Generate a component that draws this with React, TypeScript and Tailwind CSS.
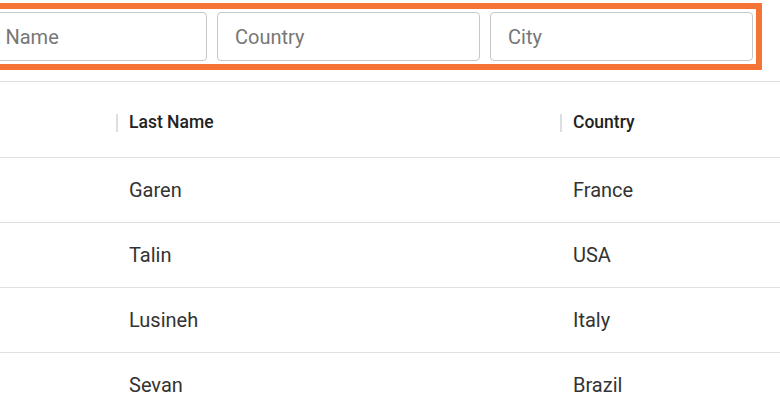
import React from "react";

const rows = [
  ["", "Garen", "France"],
  ["", "Talin", "USA"],
  ["", "Lusineh", "Italy"],
  ["", "Sevan", "Brazil"],
];

export default function App() {
  return (
    <div className="w-[780px] h-[417px] overflow-hidden bg-white" style={{ fontFamily: "Roboto, 'Noto Sans', sans-serif" }}>
      <div className="-ml-[65px] w-[845px] pt-[3px]">
        <div className="w-[827px] h-[67px] border-[6px] border-[#f47335] p-[3px] flex gap-[10px]">
          {["Last Name", "Country", "City"].map((p) => (
            <input
              key={p}
              placeholder={p}
              className="w-[263px] h-[49px] shrink-0 border border-[#c8c8c8] rounded-[4px] pl-[17px] text-[20px] text-[#333] placeholder:text-[#777] outline-none"
            />
          ))}
        </div>
        <div className="mt-[11px] border-t border-[#e0e0e0]">
          <div className="grid grid-cols-[181px_444px_1fr] h-[76px] border-b border-[#e0e0e0] text-[17.5px] font-medium text-[#222]">
            <div />
            <div className="flex items-center pt-[6px]">
              <span className="w-[2px] h-[18px] bg-[#dedede] mr-[11px]" />
              Last Name
            </div>
            <div className="flex items-center pt-[6px]">
              <span className="w-[2px] h-[18px] bg-[#dedede] mr-[11px]" />
              Country
            </div>
          </div>
          {rows.map((r) => (
            <div key={r[1]} className="grid grid-cols-[181px_444px_1fr] h-[65px] border-b border-[#e0e0e0] text-[20px] text-[#333]">
              <div />
              <div className="flex items-center pl-[13px]">{r[1]}</div>
              <div className="flex items-center pl-[13px]">{r[2]}</div>
            </div>
          ))}
        </div>
      </div>
    </div>
  );
}
